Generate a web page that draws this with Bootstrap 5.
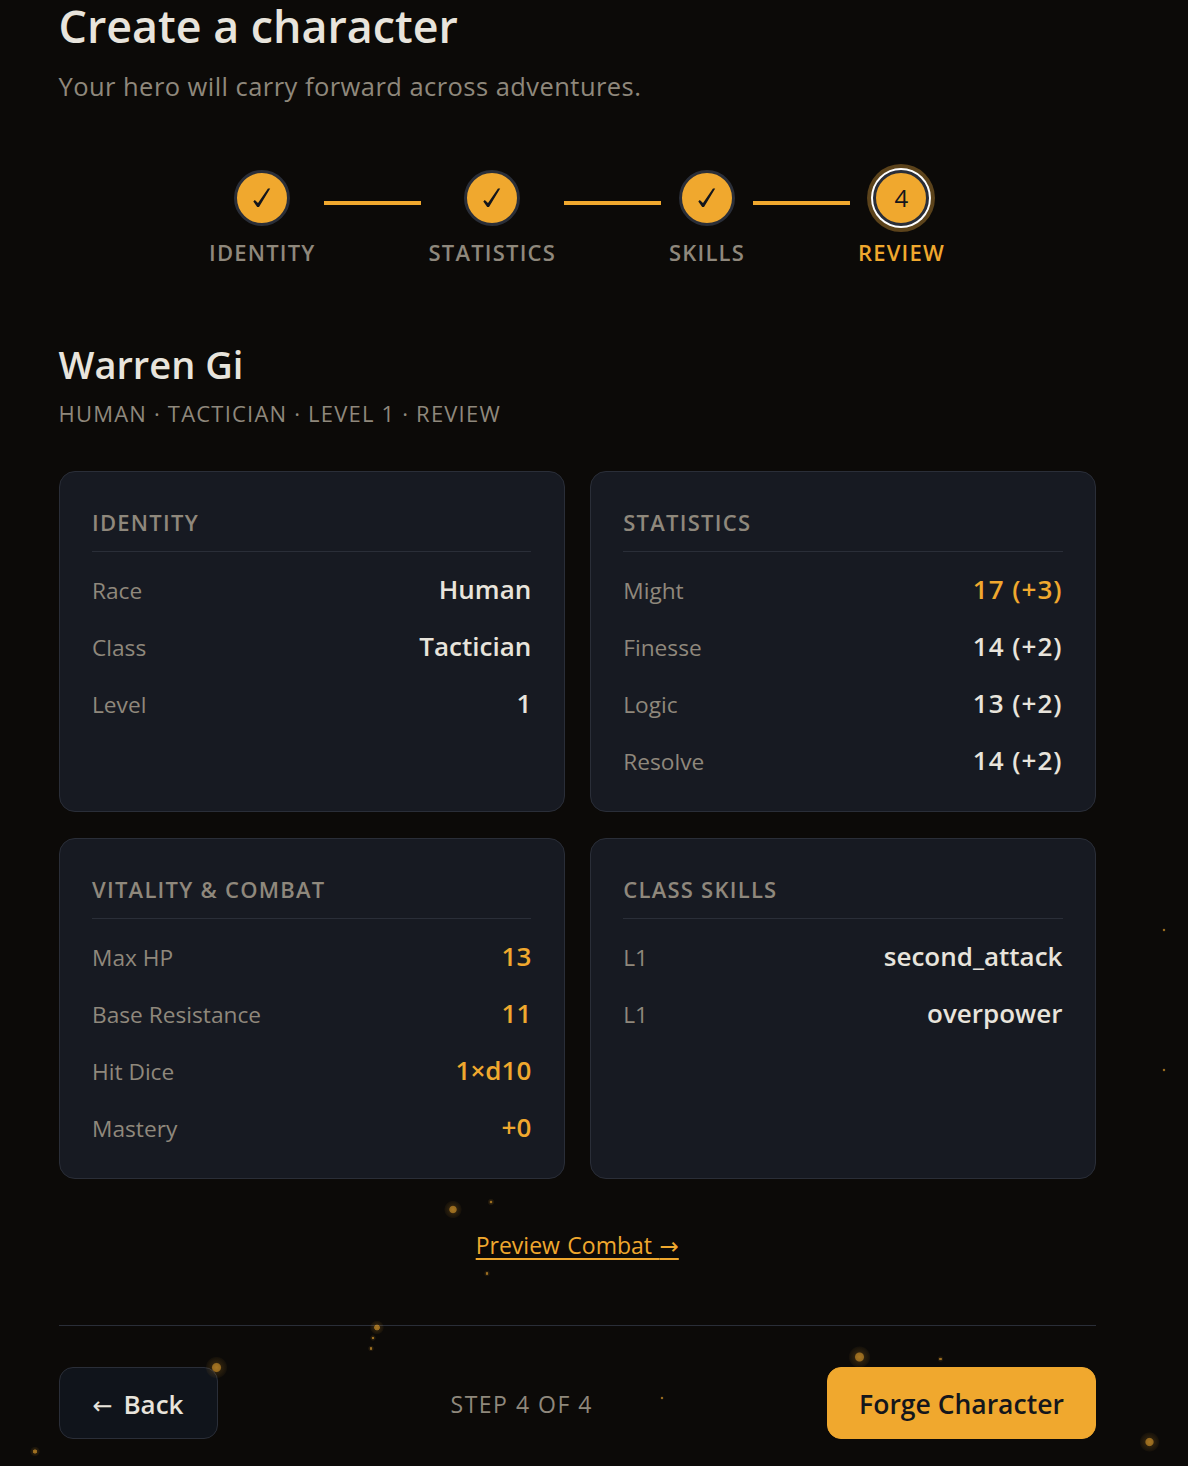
<!doctype html>
<html lang="en"><head><meta charset="utf-8"><title>Create a character</title>
<link href="https://cdn.jsdelivr.net/npm/bootstrap@5.3.0/dist/css/bootstrap.min.css" rel="stylesheet">
<style>
html,body{height:100%}
body{background:#0c0a08;color:#e8e4dc;font-family:"Open Sans","Noto Sans",sans-serif;overflow:hidden;position:relative}
.shell{width:1037.5px;margin-left:58.5px}
.ttl{font-size:44.8px;font-weight:600;line-height:52px;margin:0;color:#e8e4dc}
.sub{line-height:36px;color:#8f887c;margin:16px 0 0 0;font-size:25.5px;letter-spacing:.45px}
.stepper{width:736px;margin:65.5px 0 0 150.5px}
.stp{flex:none;text-align:center}
.dot{width:56px;height:56px;border-radius:50%;background:#f0a82e;border:3px solid #2a2e38;color:#14161c;font-size:24px;line-height:1;margin-bottom:12px}
.dot-on{box-shadow:0 0 0 2px #fff,0 0 0 6px #5c431b}
.stl{font-size:22px;line-height:28px;font-weight:600;letter-spacing:1.2px;color:#8f887c}
.stl-on{color:#f0a82e}
.lnk{flex:1 1 0;height:4px;background:#f0a82e;margin:31px 8px 0 8px}
.hero{font-size:38px;font-weight:600;line-height:46px;margin:75.500px 0 0 0}
.meta{font-size:22px;line-height:30px;letter-spacing:1.2px;color:#8f887c;margin-top:11px}
.grid-top{--bs-gutter-x:25px;--bs-gutter-y:25.6px;margin-top:17.4px}
.pnl{background:#171a22;border:1px solid #2a2e38;border-radius:16px;padding:36px 32.5px 20px;height:100%}
.pnl-h{font-size:22px;line-height:28px;font-weight:600;letter-spacing:1.25px;color:#8f887c;border-bottom:1px solid #2a2e38;padding-bottom:15px;margin-bottom:11px}
.rw{height:57px}
.rw-k{font-size:22.7px;color:#8f887c}
.rw-v{font-size:26px;font-weight:600;color:#e8e4dc;line-height:1;margin-top:-4px}
.rw-s{letter-spacing:1px}
.rw-a{color:#f0a82e}
.prev-wrap{margin-top:49px}
.prev{color:#f0a82e;font-size:23px;text-decoration-thickness:2px;text-underline-offset:4px;word-spacing:1.5px}
.prev:hover{color:#f0a82e}
.arw{font-family:"DejaVu Sans",sans-serif}
.prev .arw{font-size:23px;font-weight:400}
.bk .arw{font-size:24px;font-weight:400;margin-right:4px}
.rule{border-top:1px solid #2a2e38;margin-top:62px;padding-top:41px}
.bk{background:#10141b;border:1px solid #2a2e38;border-radius:14px;color:#e8e4dc;font-size:26px;font-weight:600;width:159px;height:72px;padding-top:9px}
.fg{background:#f0a82e;border:1px solid #f0a82e;border-radius:14px;color:#14161c;font-size:26.5px;font-weight:600;width:269px;height:72px;padding-top:9px}
.cnt{font-size:23px;letter-spacing:1.5px;color:#8f887c;margin-left:-1px;margin-top:3px}
.sparks{position:absolute;left:0;top:0;pointer-events:none}
</style></head><body>
<main class="shell">
<h1 class="ttl">Create a character</h1>
<p class="sub">Your hero will carry forward across adventures.</p>
<div class="stepper d-flex align-items-start">
 <div class="stp"><div class="dot mx-auto d-flex align-items-center justify-content-center"><svg width="18" height="20" viewBox="0 0 18 20" aria-label="done"><path fill="#14161c" d="M.3 13.600 1.800 12 5 15 15 .6 17.200 .6 6 19H4.200Z"/></svg></div><div class="stl">IDENTITY</div></div>
 <div class="lnk"></div>
 <div class="stp"><div class="dot mx-auto d-flex align-items-center justify-content-center"><svg width="18" height="20" viewBox="0 0 18 20" aria-label="done"><path fill="#14161c" d="M.3 13.600 1.800 12 5 15 15 .6 17.200 .6 6 19H4.200Z"/></svg></div><div class="stl">STATISTICS</div></div>
 <div class="lnk"></div>
 <div class="stp"><div class="dot mx-auto d-flex align-items-center justify-content-center"><svg width="18" height="20" viewBox="0 0 18 20" aria-label="done"><path fill="#14161c" d="M.3 13.600 1.800 12 5 15 15 .6 17.200 .6 6 19H4.200Z"/></svg></div><div class="stl">SKILLS</div></div>
 <div class="lnk"></div>
 <div class="stp"><div class="dot dot-on mx-auto d-flex align-items-center justify-content-center">4</div><div class="stl stl-on">REVIEW</div></div>
</div>
<h2 class="hero">Warren Gi</h2>
<div class="meta">HUMAN · TACTICIAN · LEVEL 1 · REVIEW</div>
<div class="row grid-top">
 <div class="col-6"><section class="pnl"><div class="pnl-h">IDENTITY</div>
  <div class="rw d-flex justify-content-between align-items-center"><span class="rw-k">Race</span><span class="rw-v">Human</span></div>
  <div class="rw d-flex justify-content-between align-items-center"><span class="rw-k">Class</span><span class="rw-v">Tactician</span></div>
  <div class="rw d-flex justify-content-between align-items-center"><span class="rw-k">Level</span><span class="rw-v">1</span></div>
 </section></div>
 <div class="col-6"><section class="pnl"><div class="pnl-h">STATISTICS</div>
  <div class="rw d-flex justify-content-between align-items-center"><span class="rw-k">Might</span><span class="rw-v rw-a rw-s">17 (+3)</span></div>
  <div class="rw d-flex justify-content-between align-items-center"><span class="rw-k">Finesse</span><span class="rw-v rw-s">14 (+2)</span></div>
  <div class="rw d-flex justify-content-between align-items-center"><span class="rw-k">Logic</span><span class="rw-v rw-s">13 (+2)</span></div>
  <div class="rw d-flex justify-content-between align-items-center"><span class="rw-k">Resolve</span><span class="rw-v rw-s">14 (+2)</span></div>
 </section></div>
 <div class="col-6"><section class="pnl"><div class="pnl-h">VITALITY &amp; COMBAT</div>
  <div class="rw d-flex justify-content-between align-items-center"><span class="rw-k">Max HP</span><span class="rw-v rw-a">13</span></div>
  <div class="rw d-flex justify-content-between align-items-center"><span class="rw-k">Base Resistance</span><span class="rw-v rw-a">11</span></div>
  <div class="rw d-flex justify-content-between align-items-center"><span class="rw-k">Hit Dice</span><span class="rw-v rw-a">1×d10</span></div>
  <div class="rw d-flex justify-content-between align-items-center"><span class="rw-k">Mastery</span><span class="rw-v rw-a">+0</span></div>
 </section></div>
 <div class="col-6"><section class="pnl"><div class="pnl-h">CLASS SKILLS</div>
  <div class="rw d-flex justify-content-between align-items-center"><span class="rw-k">L1</span><span class="rw-v">second_attack</span></div>
  <div class="rw d-flex justify-content-between align-items-center"><span class="rw-k">L1</span><span class="rw-v">overpower</span></div>
 </section></div>
</div>
<div class="text-center prev-wrap"><a class="prev" href="#">Preview Combat <span class="arw">→</span></a></div>
<div class="rule d-flex justify-content-between align-items-center">
 <button class="btn bk" type="button"><span class="arw">←</span> Back</button>
 <span class="cnt">STEP 4 OF 4</span>
 <button class="btn fg" type="button">Forge Character</button>
</div>
</main>
<svg class="sparks" width="1188" height="1466" viewBox="0 0 1188 1466" aria-hidden="true">
<defs><radialGradient id="gl"><stop offset="0" stop-color="#f0a82e" stop-opacity=".68"/><stop offset=".36" stop-color="#f0a82e" stop-opacity=".6"/><stop offset=".46" stop-color="#f0a82e" stop-opacity=".14"/><stop offset=".9" stop-color="#f0a82e" stop-opacity=".05"/><stop offset="1" stop-color="#f0a82e" stop-opacity="0"/></radialGradient></defs>
<g fill="url(#gl)">
<circle cx="453" cy="1209.500" r="9"/><circle cx="491" cy="1202" r="3.500"/><circle cx="487" cy="1273.500" r="3"/>
<circle cx="377" cy="1327.500" r="7"/><circle cx="373" cy="1338" r="3"/><circle cx="371" cy="1348.500" r="3"/>
<circle cx="216.500" cy="1367.500" r="11"/><circle cx="35" cy="1451.500" r="5"/><circle cx="859.500" cy="1357" r="11"/>
<circle cx="940.500" cy="1359" r="3"/><circle cx="662" cy="1398" r="2"/><circle cx="1149.500" cy="1442" r="10"/>
<circle cx="1164" cy="1070" r="2"/><circle cx="1164" cy="930" r="2"/>
</g></svg>
</body></html>
